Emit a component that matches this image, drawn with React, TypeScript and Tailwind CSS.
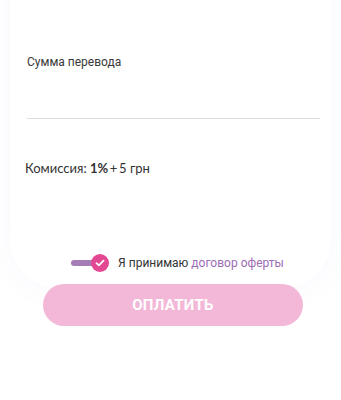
import React from 'react'

export default function App() {
  return (
    <div className="min-h-[400px] w-[341px] bg-white overflow-hidden relative font-['Roboto',sans-serif]">
      <div className="mx-[10px] -mt-[60px] rounded-[48px] bg-white shadow-[0_0_26px_rgba(160,130,210,0.08)] h-[348px] pt-[115px] px-[17px]">
        <div className="text-[12px] leading-[14px] text-[#3a3a3a]">Сумма перевода</div>
        <div className="mt-[49px] h-[1px] w-[293px] bg-[#dcdcdc]" />
        <div className="mt-[41px] -ml-[2px] text-[13px] leading-[16px] text-[#333] font-['Lato',sans-serif]">
          Комиссия: <span className="font-bold">1%</span>{'\u2009+\u2009'}5 грн
        </div>
        <div className="mt-[78px] flex items-center justify-center gap-[9px] pl-[14px]">
          <div className="relative w-[38px] h-[18px] flex items-center">
            <div className="w-[28px] h-[6px] rounded-full bg-[#a57cb5]" />
            <div className="absolute right-0 top-0 w-[18px] h-[18px] rounded-full bg-[#e34892] flex items-center justify-center">
              <svg width="10" height="8" viewBox="0 0 10 8" fill="none">
                <path d="M1.5 4.2 L3.9 6.4 L8.5 1.6" stroke="white" strokeWidth="1.8" strokeLinecap="round" strokeLinejoin="round" />
              </svg>
            </div>
          </div>
          <div className="text-[12px] leading-[14px] text-[#333]">
            Я принимаю <span className="text-[#9b6db3]">договор оферты</span>
          </div>
        </div>
      </div>
      <div className="px-[43px] -mt-[4px] relative">
        <button className="w-[260px] h-[42px] rounded-full bg-[#f3b8d8] text-white text-[15px] font-bold tracking-[0.3px]">
          ОПЛАТИТЬ
        </button>
      </div>
    </div>
  )
}
